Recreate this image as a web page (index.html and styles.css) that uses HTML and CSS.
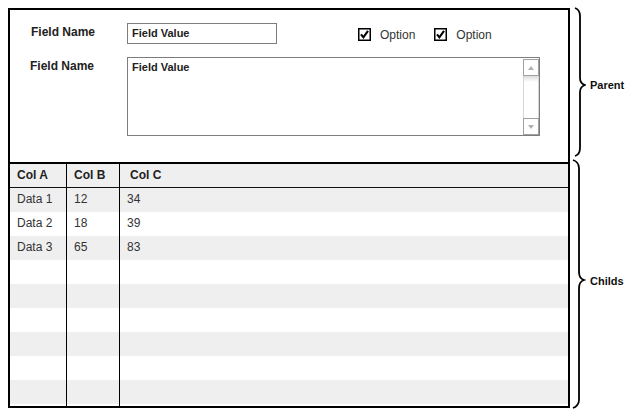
FILE: index.html
```html
<!DOCTYPE html>
<html>
<head>
<meta charset="utf-8">
<link rel="stylesheet" href="styles.css">
</head>
<body>
<div class="page">
  <div class="frame">
    <div class="parent">
      <div class="form-row row-1">
        <div class="label">Field Name</div>
        <div class="input">Field Value</div>
        <div class="options">
          <div class="option">
            <svg class="cb" width="13" height="13" viewBox="0 0 13 13"><rect x="0.75" y="0.75" width="11.5" height="11.5" fill="#fff" stroke="#000" stroke-width="1.5"/><path d="M3 6.3 L5.4 9.3 L10 2.8" fill="none" stroke="#000" stroke-width="2.1" stroke-linejoin="miter"/></svg>
            <span>Option</span>
          </div>
          <div class="option">
            <svg class="cb" width="13" height="13" viewBox="0 0 13 13"><rect x="0.75" y="0.75" width="11.5" height="11.5" fill="#fff" stroke="#000" stroke-width="1.5"/><path d="M3 6.3 L5.4 9.3 L10 2.8" fill="none" stroke="#000" stroke-width="2.1" stroke-linejoin="miter"/></svg>
            <span>Option</span>
          </div>
        </div>
      </div>
      <div class="form-row row-2">
        <div class="label">Field Name</div>
        <div class="textarea">
          <div class="ta-text">Field Value</div>
          <div class="scrollbar">
            <div class="sb-btn"><span class="arrow up"></span></div>
            <div class="sb-track"></div>
            <div class="sb-btn"><span class="arrow down"></span></div>
          </div>
        </div>
      </div>
    </div>
    <div class="table">
      <div class="trow head"><div class="cell">Col A</div><div class="cell">Col B</div><div class="cell c">Col C</div></div>
      <div class="tbody">
        <div class="trow odd"><div class="cell">Data 1</div><div class="cell">12</div><div class="cell">34</div></div>
        <div class="trow"><div class="cell">Data 2</div><div class="cell">18</div><div class="cell">39</div></div>
        <div class="trow odd"><div class="cell">Data 3</div><div class="cell">65</div><div class="cell">83</div></div>
        <div class="trow"><div class="cell"></div><div class="cell"></div><div class="cell"></div></div>
        <div class="trow odd"><div class="cell"></div><div class="cell"></div><div class="cell"></div></div>
        <div class="trow"><div class="cell"></div><div class="cell"></div><div class="cell"></div></div>
        <div class="trow odd"><div class="cell"></div><div class="cell"></div><div class="cell"></div></div>
        <div class="trow"><div class="cell"></div><div class="cell"></div><div class="cell"></div></div>
        <div class="trow odd"><div class="cell"></div><div class="cell"></div><div class="cell"></div></div>
        <div class="trow"><div class="cell"></div><div class="cell"></div><div class="cell"></div></div>
      </div>
    </div>
  </div>
  <div class="notes">
    <div class="note note-parent">
      <svg width="16" height="151" viewBox="0 0 16 151"><path d="M5,1 C8,2 10,5 10,9 L10,71 C10,75 12,77 15,78 C12,79 10,81 10,85 L10,141 C10,145 8,148 5,149" fill="none" stroke="#000" stroke-width="1.8"/></svg>
      <span class="note-label">Parent</span>
    </div>
    <div class="note note-childs">
      <svg width="16" height="252" viewBox="0 0 16 252"><path d="M3,2 C6,3 9,6 9,10 L9,114 C9,118 11,121 14,122 C11,123 9,126 9,130 L9,242 C9,246 6,249 3,250" fill="none" stroke="#000" stroke-width="1.8"/></svg>
      <span class="note-label childs-label">Childs</span>
    </div>
  </div>
</div>
</body>
</html>
```
FILE: styles.css
```css
html, body {
  margin: 0;
  padding: 0;
  background: #fff;
}
body {
  font-family: "Liberation Sans", Arial, sans-serif;
  color: #222;
}
.page {
  display: flex;
  padding: 8px;
}
.frame {
  width: 562px;
  height: 400px;
  border: 2px solid #000;
  box-sizing: border-box;
  display: flex;
  flex-direction: column;
}
.parent {
  height: 154px;
  border-bottom: 2px solid #000;
  box-sizing: border-box;
  padding: 13px 0 0 20px;
}
.form-row {
  display: flex;
  align-items: flex-start;
}
.row-2 {
  margin-top: 13px;
}
.label {
  width: 97px;
  font-size: 12px;
  font-weight: bold;
  line-height: 14px;
  margin-top: 2px;
  padding-left: 1px;
  box-sizing: border-box;
}
.row-2 .label {
  padding-left: 0;
  margin-top: 2px;
}
.input {
  width: 150px;
  height: 21px;
  border: 1px solid #7d7d7d;
  box-sizing: border-box;
  padding: 0 4px;
  font-size: 11px;
  font-weight: bold;
  line-height: 19px;
}
.options {
  display: flex;
  align-items: center;
  height: 21px;
  margin-left: 81px;
  gap: 19px;
}
.option {
  display: flex;
  align-items: center;
  gap: 9px;
  font-size: 12px;
  color: #333;
  padding-top: 1px;
}
.option span {
  padding-top: 2px;
}
.cb {
  display: block;
}
.textarea {
  width: 413px;
  height: 79px;
  border: 1px solid #7d7d7d;
  box-sizing: border-box;
  display: flex;
}
.ta-text {
  flex: 1;
  padding: 2px 4px;
  font-size: 11px;
  font-weight: bold;
  line-height: 14px;
}
.scrollbar {
  width: 16px;
  margin-top: 1px;
  display: flex;
  flex-direction: column;
}
.sb-btn {
  height: 17px;
  border: 1px solid #a0a0a0;
  box-sizing: border-box;
  background: #fff;
  display: flex;
  align-items: center;
  justify-content: center;
}
.sb-track {
  flex: 1;
  border-left: 1px solid #d6d6d6;
  border-right: 1px solid #d6d6d6;
  background: linear-gradient(#dcdcdc, #f4f4f4 4px, #fff 6px);
}
.arrow {
  width: 0;
  height: 0;
  border-left: 3px solid transparent;
  border-right: 3px solid transparent;
}
.arrow.up {
  border-bottom: 4px solid #b0b0b0;
}
.arrow.down {
  border-top: 4px solid #b0b0b0;
}
.table {
  flex: 1;
  display: flex;
  flex-direction: column;
  overflow: hidden;
}
.trow {
  display: grid;
  grid-template-columns: 57px 53px 1fr;
  height: 24px;
  flex: none;
}
.trow.head {
  height: 24px;
  background: #efefef;
  border-bottom: 1px solid #111;
  box-sizing: border-box;
}
.trow.odd {
  background: #efefef;
}
.cell {
  box-sizing: border-box;
  padding: 4px 0 0 7px;
  font-size: 12px;
  line-height: 14px;
  color: #333;
}
.cell:nth-child(1), .cell:nth-child(2) {
  border-right: 1px solid #000;
}
.head .cell {
  padding-top: 4px;
  font-weight: bold;
  color: #222;
}
.head .cell.c {
  padding-left: 10px;
}
.tbody {
  flex: 1;
  overflow: hidden;
}
.notes {
  display: flex;
  flex-direction: column;
  margin-top: -1px;
}
.note {
  display: flex;
  align-items: center;
}
.note svg {
  display: block;
  flex: none;
}
.note-parent {
  height: 151px;
}
.note-childs {
  height: 252px;
}
.note-label {
  font-size: 11px;
  font-weight: bold;
  margin-left: 4px;
  color: #111;
}
.note-parent .note-label {
  padding-top: 4px;
}
.childs-label {
  padding-bottom: 6px;
}
```
